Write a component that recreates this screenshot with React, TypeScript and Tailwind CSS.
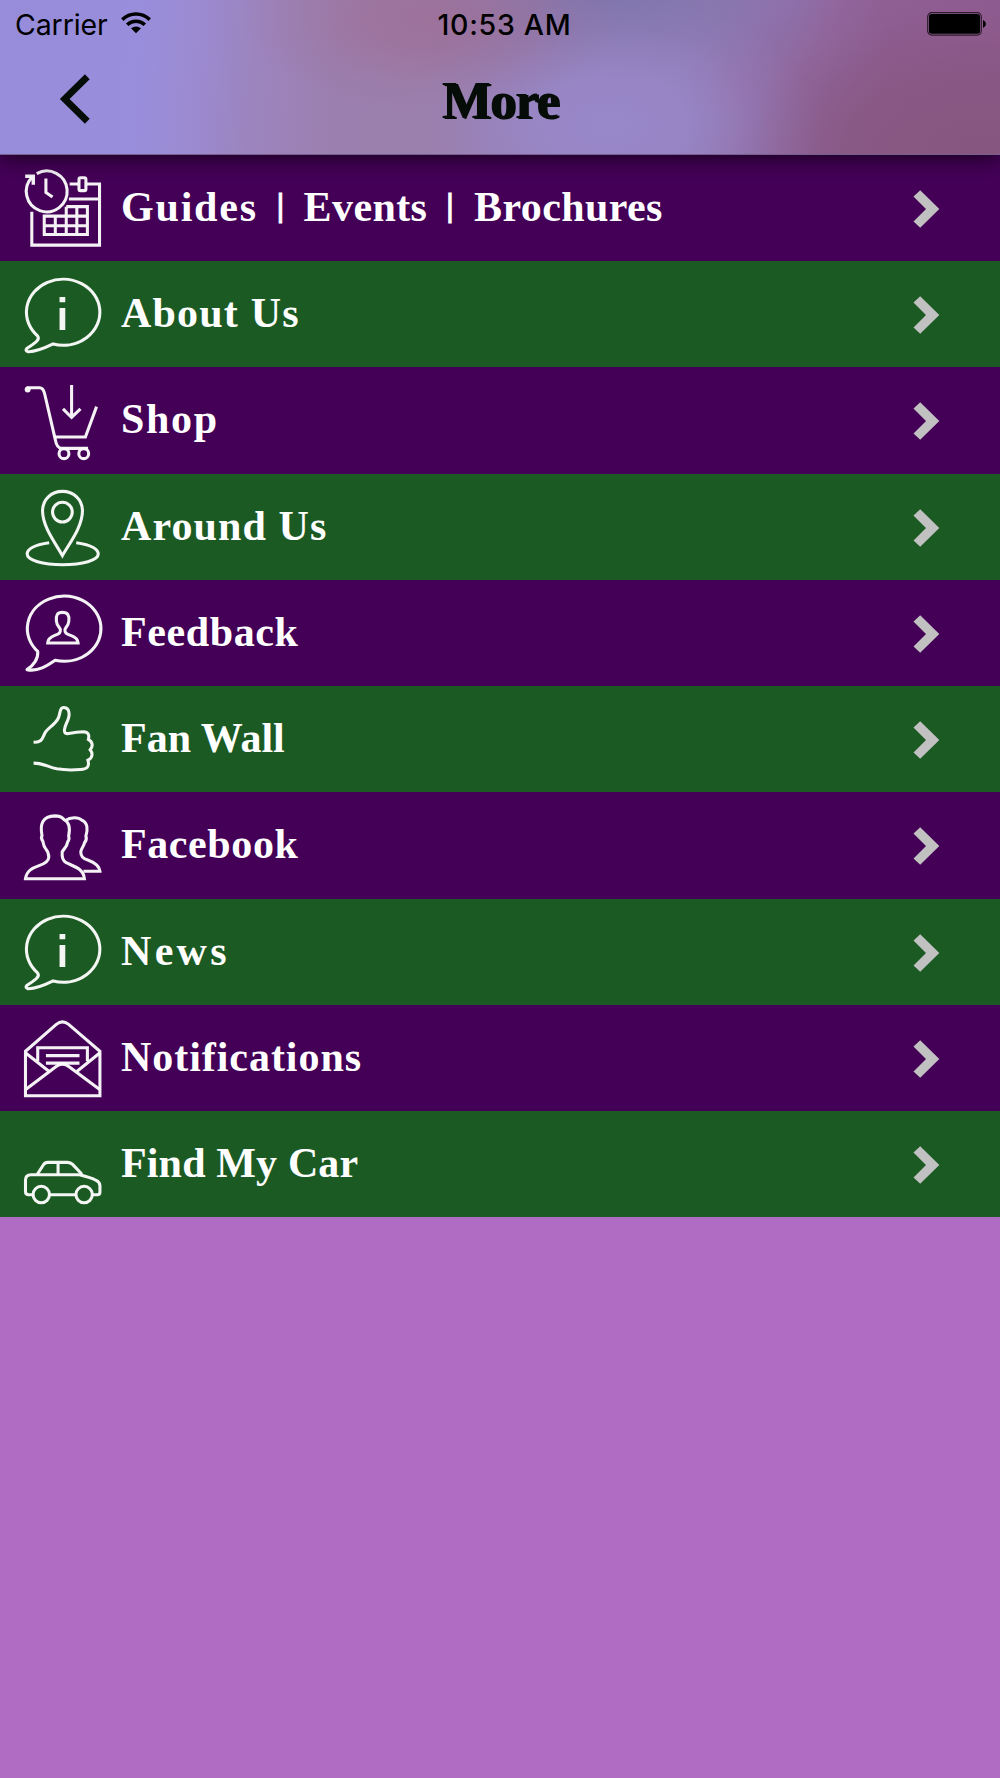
import React from 'react';
import clsx from 'clsx';

const InfoBubble = () => (
    <>
        <path d="M13.5 59.2A37.200 33.400 0 1 1 29.3 67.4C22 71 12 75.5 3.8 75.200C1.6 75 1.3 73.2 2.700 72C9 67.500 17 63.500 13.500 59.200Z" />
        <path d="M35.800 19.800h5.800v5.500h-5.800zM35.800 31h5.800v22.400h-5.800z" fill="currentColor" stroke="none" />
    </>
);

const icons: Record<string, React.ReactNode> = {
    calendar: (
        <>
            <path d="M12.700 3.200A20.700 20.700 0 1 1 8 6.800" />
            <path d="M1 6H9.200V14.500" strokeWidth="3.500" />
            <path d="M22 8.300V22.300L28.700 27" />
            <path d="M7.700 42V75.700H76.300V13.800H63.300M46 13.800H54.700M45.300 29H76.300" />
            <rect x="55.500" y="7.500" width="7" height="13" rx="1.500" />
            <path d="M42.600 36.700H64V65H20.300V46.300H64M42.600 36.700V65M53.300 36.700V65M31.500 46.300V65M20.300 56H64" />
        </>
    ),
    info: <InfoBubble />,
    cart: (
        <>
            <circle cx="3.500" cy="6.200" r="3" fill="currentColor" stroke="none" />
            <path d="M2.500 4.500H15.500C18.500 4.500 19.800 6.500 20.700 10.500L31.500 57C32.500 62.500 34 65.800 38 65.800H64.700" />
            <path d="M31 54.200H62L73.300 23.500" />
            <circle cx="40.300" cy="71.200" r="5" />
            <circle cx="60.300" cy="71.200" r="5" />
            <path d="M48 1.500V35M39.300 25.800L48 34.500L57 25.800" />
        </>
    ),
    pin: (
        <>
            <path d="M38.700 67C32 55 18.600 38 18.600 22C18.600 10 27.500 2 38.700 2C50 2 59 10 59 22C59 38 45.500 55 38.700 67Z" />
            <circle cx="38.700" cy="23" r="10" />
            <path d="M25.300 54C12 56 3 60 3 65.500C3 72 19 76.300 39 76.300C59 76.300 75 72 75 65.500C75 60 66 56 52.700 54" />
        </>
    ),
    feedback: (
        <>
            <path d="M13.700 56.700A37.300 33 0 1 1 31.300 65.700C23 71.500 14 77.500 2.800 75.200C9.500 71 14.500 64 13.700 56.700Z" strokeLinejoin="round" />
            <path d="M23.800 48.200C24 44 27 42 31 40.500C35.500 39 37 37.800 36.600 34.500C36.400 32.500 33 31 32.600 26C32 20 33.500 17.200 38.700 17.200C44 17.200 45.800 20 45.200 26C44.800 31 41.600 32.500 41.300 34.500C40.900 37.800 42.500 39 47 40.500C51.500 42 54.200 44 54.600 48.200Z" />
        </>
    ),
    thumb: (
        <>
            <path d="M9.500 40.200C18 41 18.500 36 21 31C24 25.500 31 23 34.500 16C37 11 35.500 5.200 39.800 5.200C44.500 5.200 46 9 45.300 14C44.600 19 41 23 40.700 28C40.600 31 42 32 45 31.500C51 30.500 55 30 60 29.800C65 30 66.200 33 65 37.500C69.500 40 70 44.500 66.800 48C70 52 69 56.500 64.500 58.500C66.500 65.500 63.500 67.500 57 68C49 68.700 40 68.500 33 67.300C24 65.500 20 61.500 9.500 61.500" />
        </>
    ),
    people: (
        <>
            <path d="M1.300 71.300C2.500 63 8 60.500 15 58C21 56 24.700 54 24.900 49.500C25 45 24 43.500 21.500 40.500C19.500 38 19.500 36 19 33.500C17.300 31.500 17 29.500 18 27.500C15.800 16 18.500 8 31 7.600C36 7.600 38.500 9 40.500 11.500C45.500 14 46.800 20 45 28C46 30.500 45.500 32 44 34C43.500 38.500 40.500 40.500 38.500 44C38 49 38.300 52.500 42.500 55C51 59 60 61 61 71.300Z" />
            <path d="M41.700 12.200C47 8.500 55 8.500 58.500 12C64.500 14.500 64.500 22 62.500 28C63.500 31 63 33 61 35C60.500 38.500 57.500 40.500 57.300 44C57.300 48.500 59 50.500 65 52.500C72 55 76 58 76.700 63.700H60" />
        </>
    ),
    mail: (
        <>
            <path d="M1.300 76.300V31.300L32.500 4C36.500.8 41 .8 45 4L76.700 31.300V76.300Z" />
            <path d="M13.700 41.500V27.700H64V41.500M22 35.700H56M22 43.300H56" />
            <path d="M1.500 33L25.300 51.700M76.500 33L53.300 51.700" />
            <path d="M1.500 70L32 47Q38.700 41.500 45.500 47L76.500 70" />
        </>
    ),
    car: (
        <>
            <path d="M9.300 68.300H4.500Q1.300 68.300 1.300 65V53.500Q1.300 48 7 48H56C64 50 69 51.500 72.500 53.500Q76.700 55.500 76.700 59V65.500Q76.700 68.300 74 68.300H69M25.800 68.300H52.200" />
            <path d="M13.300 47.500L19.500 37.800Q21 35.400 24 35.400H44Q47 35.400 49 37.500L58.500 47.500M34.300 35.400V48" />
            <circle cx="17.300" cy="68" r="8.300" />
            <circle cx="60.700" cy="68" r="8.300" />
        </>
    ),
};

const menuItems = [
    { label: 'About Us', icon: 'info', tracking: 'tracking-[1.2px]' },
    { label: 'Shop', icon: 'cart', tracking: 'tracking-[1.7px]' },
    { label: 'Around Us', icon: 'pin', tracking: 'tracking-[1.1px]' },
    { label: 'Feedback', icon: 'feedback', tracking: 'tracking-[0.6px]' },
    { label: 'Fan Wall', icon: 'thumb', tracking: 'tracking-[0px]' },
    { label: 'Facebook', icon: 'people', tracking: 'tracking-[0.6px]' },
    { label: 'News', icon: 'info', tracking: 'tracking-[3.3px]' },
    { label: 'Notifications', icon: 'mail', tracking: 'tracking-[0.95px]' },
    { label: 'Find My Car', icon: 'car', tracking: 'tracking-[0.15px]' },
];

interface MenuRowProps {
    icon: string;
    green?: boolean;
    tracking?: string;
    children: React.ReactNode;
}

const MenuRow: React.FC<MenuRowProps> = ({ icon, green, tracking, children }) => (
    <li className={clsx('flex h-[106.25px] items-center pl-6 pr-[60px]', green ? 'bg-[#1c5a24]' : 'bg-[#440057]')}>
        <svg viewBox="-0.2 -0.4 79 79" className="mt-[3px] size-[78px] shrink-0 overflow-visible text-white/95" fill="none" stroke="currentColor" strokeWidth="3.1">
            {icons[icon]}
        </svg>
        <span className={clsx('ml-[19px] flex-1 whitespace-nowrap pb-[2px] font-["Palatino","Liberation_Serif",serif] text-[42px] leading-[48px] font-bold text-white', tracking)}>
            {children}
        </span>
        <svg viewBox="0 0 27 38" className="mt-[2px] h-[38px] w-[27px]" fill="#c1c1c1">
            <path d="M.5 6.500L7.200.2L26.300 19L7.200 37.800L.5 31.500L13 19Z" />
        </svg>
    </li>
);

const Divider = () => <span className="mx-[18.500px] align-[5px] font-['Liberation_Sans',sans-serif] text-[32px] leading-none font-normal [-webkit-text-stroke:0.8px_white]">|</span>;

export default function App() {
    return (
        <div className="flex h-[1778px] w-[1000px] flex-col overflow-hidden bg-[#b06cc2]">
            <header className="relative z-10 flex h-[154.75px] shrink-0 flex-col border-b border-[#76608f] bg-[radial-gradient(ellipse_190px_90px_at_430px_18px,#9e7199dd_0%,#9e7199aa_35%,#9e719933_75%,#9e719900_100%),radial-gradient(ellipse_210px_130px_at_610px_125px,#9888ca_0%,#9888cacc_35%,#9888ca33_75%,#9888ca00_100%),radial-gradient(ellipse_240px_110px_at_600px_0px,#7f75ad_0%,#7f75adbb_35%,#7f75ad33_75%,#7f75ad00_100%),radial-gradient(ellipse_330px_180px_at_980px_150px,#875680_0%,#875680cc_40%,#87568033_75%,#87568000_100%),linear-gradient(94deg,#978cda_0%,#998edc_14%,#9b8ad0_20%,#9c84bd_26%,#9b7faf_34%,#9b7fab_43%,#957bb5_68%,#926fa9_78%,#905f95_88%,#905c92_100%)] text-black shadow-[0_0_22px_rgba(0,0,0,0.85)]">
                <div className="grid h-[50px] grid-cols-3 items-center pr-4 pl-[15px] font-[Inter,sans-serif] text-[28.500px] leading-[50px]">
                    <div className="flex items-center gap-[13px]">
                        <span className="tracking-[-0.1px]">Carrier</span>
                        <svg viewBox="0 0 30 22" className="mb-[4px] h-[22px] w-[30px]" fill="none" stroke="black" strokeWidth="3.600">
                            <path d="M1.300 7.600C9 .2 21 .2 28.700 7.600" />
                            <path d="M6.200 12.800C11.200 8 18.800 8 23.800 12.800" />
                            <path d="M15 21.200L10 16.300Q15 12.800 20 16.300Z" fill="black" stroke="none" />
                        </svg>
                    </div>
                    <span className="pl-[10px] text-center font-medium tracking-[0.75px] whitespace-nowrap">10:53 AM</span>
                    <svg viewBox="0 0 59 24" className="mr-[-2px] mb-[2px] h-[24px] w-[59px] justify-self-end">
                        <rect x="0.700" y="0.700" width="53.600" height="22.400" rx="4" fill="none" stroke="#000" strokeOpacity="0.700" strokeWidth="1.200" />
                        <rect x="2" y="2" width="51" height="19.800" rx="2.500" />
                        <path d="M56 8Q59 9.500 59 12T56 16Z" />
                    </svg>
                </div>
                <div className="grid flex-1 grid-cols-3 items-center">
                    <svg viewBox="0 0 32 52" className="mb-[5px] ml-[59px] h-[52px] w-[32px]" fill="none" stroke="#060d08" strokeWidth="6.800">
                        <path d="M28.300 3.800L5.700 26L28.300 48.200" />
                    </svg>
                    <h1 className="mb-[2px] text-center font-['Palatino','Liberation_Serif',serif] text-[52px] leading-[60px] font-bold tracking-[-0.900px] text-[#060d08] [text-shadow:2px_1px_0_#060d08]">More</h1>
                </div>
            </header>
            <ul>
                <MenuRow icon="calendar" tracking="tracking-[0.4px]">
                    <span className="tracking-[1.800px]">Guides</span>
                    <Divider />
                    Events
                    <Divider />
                    <span className="pl-px">Brochures</span>
                </MenuRow>
                {menuItems.map((item, i) => (
                    <MenuRow key={item.label} icon={item.icon} green={i % 2 === 0} tracking={item.tracking}>
                        {item.label}
                    </MenuRow>
                ))}
            </ul>
        </div>
    );
}
